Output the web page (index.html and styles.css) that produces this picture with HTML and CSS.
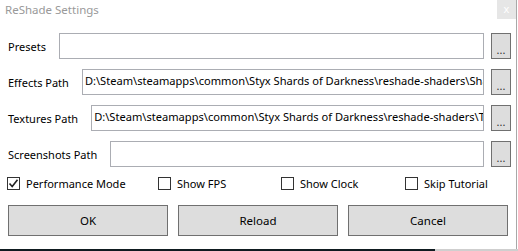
FILE: index.html
```html
<!DOCTYPE html>
<html lang="en">
<head>
    <meta charset="UTF-8">
    <title>ReShade Settings</title>
    <link rel="stylesheet" href="styles.css">
</head>
<body>
    <div class="window">
        <div class="titlebar">
            <span class="title">ReShade Settings</span>
            <span class="close">x</span>
        </div>

        <div class="form">
            <div class="row">
                <label class="label">Presets</label>
                <div class="textbox"></div>
                <button class="browse">...</button>
            </div>
            <div class="row">
                <label class="label">Effects Path</label>
                <div class="textbox"><span class="path">D:\Steam\steamapps\common\Styx Shards of Darkness\reshade-shaders\Shaders</span></div>
                <button class="browse">...</button>
            </div>
            <div class="row">
                <label class="label">Textures Path</label>
                <div class="textbox"><span class="path">D:\Steam\steamapps\common\Styx Shards of Darkness\reshade-shaders\Textures</span></div>
                <button class="browse">...</button>
            </div>
            <div class="row">
                <label class="label">Screenshots Path</label>
                <div class="textbox"></div>
                <button class="browse">...</button>
            </div>

            <div class="checks">
                <label class="check"><span class="box"><svg width="11" height="11" viewBox="0 0 11 11"><path d="M1.5 5.5 L4.2 8.5 L9.5 1.8" fill="none" stroke="#222" stroke-width="1.6"/></svg></span>Performance Mode</label>
                <label class="check"><span class="box"></span>Show FPS</label>
                <label class="check"><span class="box"></span>Show Clock</label>
                <label class="check"><span class="box"></span>Skip Tutorial</label>
            </div>

            <div class="actions">
                <button class="action">OK</button>
                <button class="action">Reload</button>
                <button class="action">Cancel</button>
            </div>
        </div>
    </div>
    <div class="desktop">
        <div class="desktop-dark"></div>
        <div class="desktop-light"></div>
    </div>
</body>
</html>
```

FILE: styles.css
```css
body {
    margin: 0;
    width: 518px;
    height: 251px;
    overflow: hidden;
    background: #fff;
    font-family: "Noto Sans", sans-serif;
    font-size: 11px;
    color: #000;
}
.window {
    height: 249px;
    width: 517px;
    border-right: 1px solid #a8a8a8;
    background: #fff;
    box-sizing: border-box;
}
.titlebar {
    height: 20px;
    display: flex;
    align-items: flex-start;
    justify-content: space-between;
}
.title {
    padding: 2px 0 0 5px;
    color: #999;
    font-size: 11.5px;
}
.close {
    width: 19px;
    height: 19px;
    background: #e6e6e6;
    color: #fff;
    font-size: 11px;
    text-align: center;
    line-height: 17px;
}
.form {
    padding: 13px 5px 0 8px;
}
.row {
    display: flex;
    align-items: center;
    height: 26px;
    margin-bottom: 10px;
}
.label {
    margin-right: 13px;
    white-space: nowrap;
}
.textbox {
    flex: 1;
    min-width: 0;
    height: 26px;
    box-sizing: border-box;
    border: 1px solid #abadb3;
    padding: 3px 2px 0 2px;
    overflow: hidden;
}
.path {
    display: block;
    width: max-content;
    white-space: nowrap;
    font-size: 11.1px;
}
.browse {
    width: 20px;
    height: 26px;
    margin-left: 7px;
    padding: 6px 0 0 0;
    border: 1px solid #707070;
    background: #dddddd;
    font-family: inherit;
    font-size: 11px;
    color: #333;
}
.checks {
    display: grid;
    grid-template-columns: 151px 123px 124px auto;
    margin: -6px 0 0 -1px;
    height: 24px;
    align-items: center;
}
.check {
    display: flex;
    align-items: center;
}
.box {
    width: 13px;
    height: 13px;
    box-sizing: border-box;
    border: 1px solid #333;
    background: #fff;
    margin-right: 6px;
    display: flex;
    align-items: center;
    justify-content: center;
}
.actions {
    display: flex;
    gap: 10px;
    margin-top: 10px;
}
.action {
    width: 160px;
    height: 31px;
    border: 1px solid #707070;
    background: #dddddd;
    font-family: inherit;
    font-size: 11.5px;
    color: #000;
}
.desktop {
    display: flex;
    height: 2px;
}
.desktop-dark {
    width: 435px;
    background: #0f1b20;
}
.desktop-light {
    flex: 1;
    background: #cfcfcf;
}
```
